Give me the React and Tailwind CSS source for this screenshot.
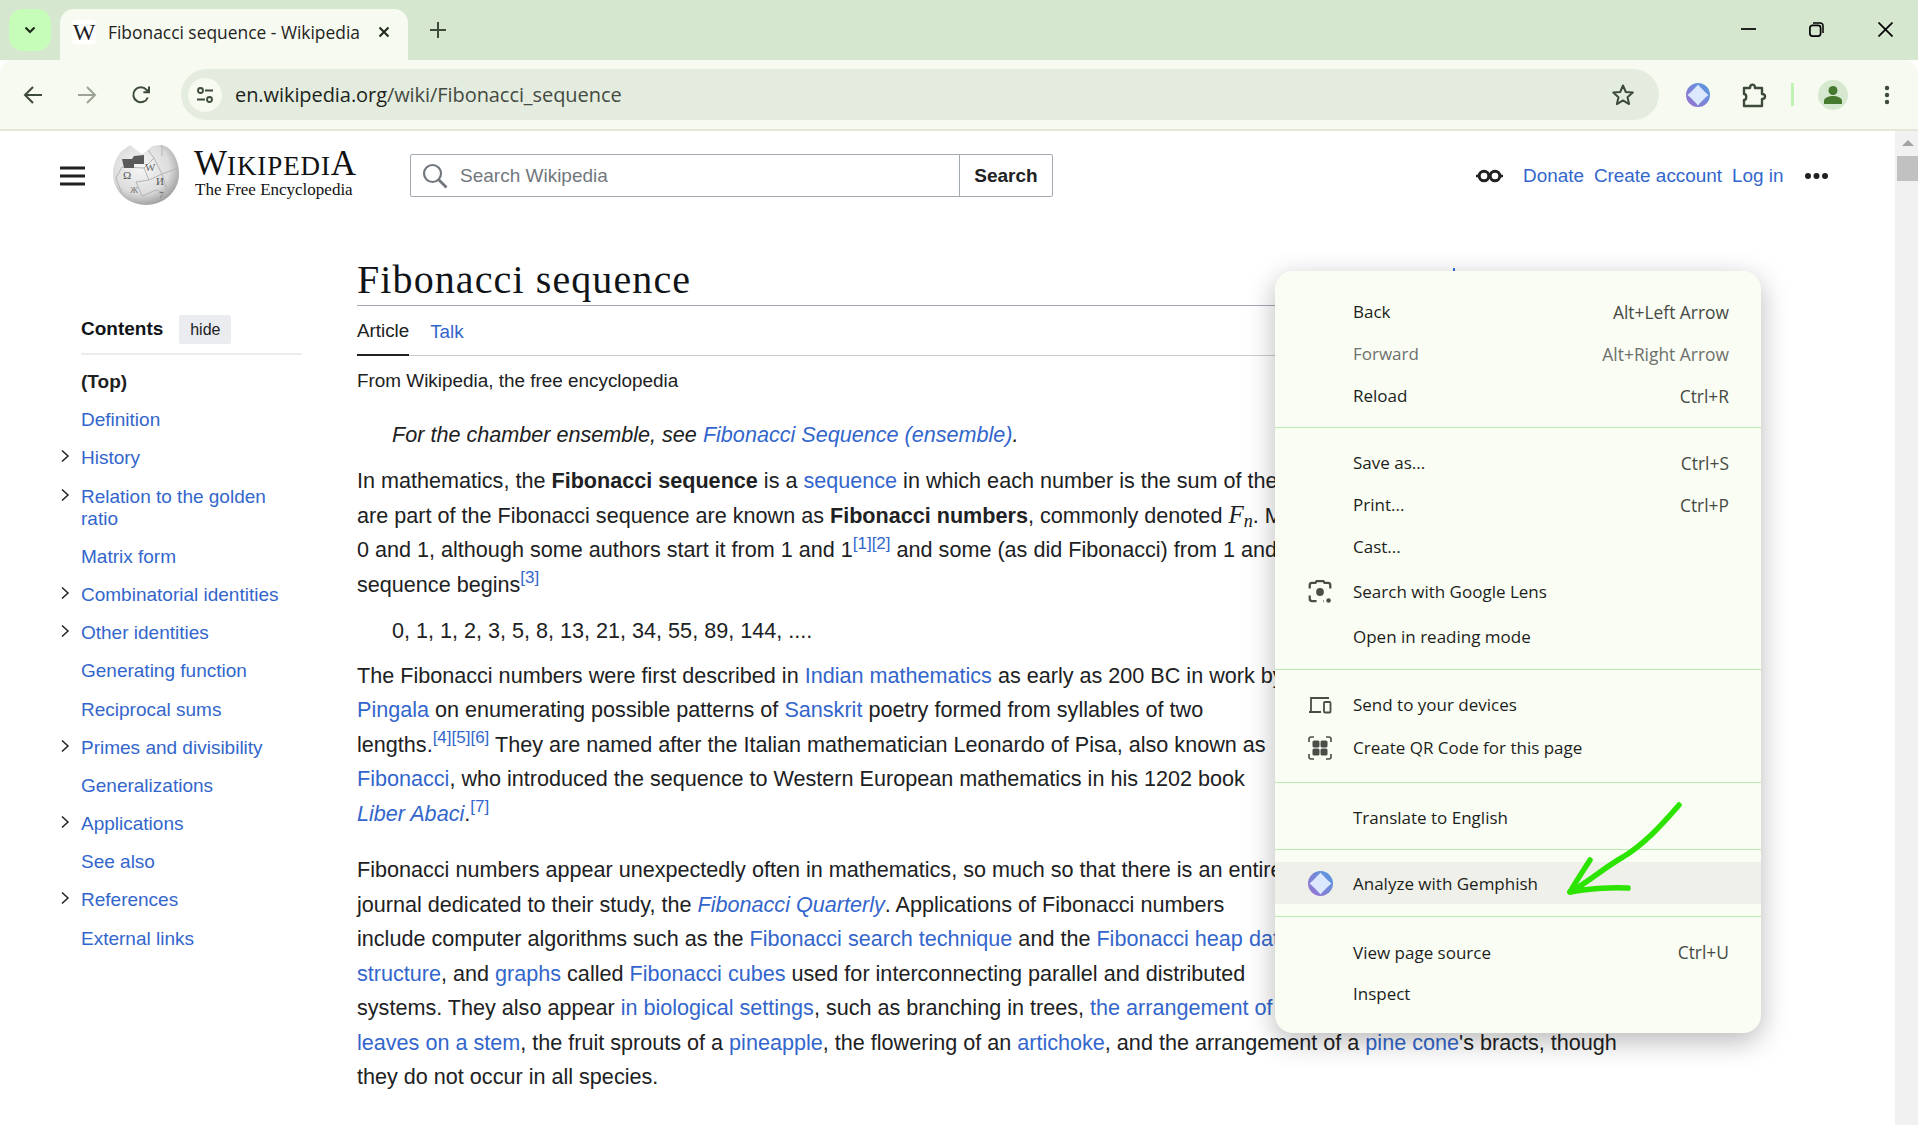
import React from "react";

const A = ({ children, i }) => (
  <a className={"text-[#3366cc] " + (i ? "italic" : "")}>{children}</a>
);
const Sup = ({ children }) => (
  <sup className="align-baseline text-[17px] text-[#3366cc]">{children}</sup>
);

const Gem = ({ size = 24 }) => (
  <svg width={size} height={size} viewBox="0 0 24 24">
    <defs>
      <linearGradient id={"gemg" + size} x1="0" y1="1" x2="1" y2="0">
        <stop offset="0" stopColor="#9a6fd0" />
        <stop offset="0.5" stopColor="#7a86d8" />
        <stop offset="1" stopColor="#4f9ae0" />
      </linearGradient>
    </defs>
    <circle cx="12" cy="12" r="12" fill={`url(#gemg${size})`} />
    <path d="M12 1.5 C13 3 21 11 22.5 12 C21 13 13 21 12 22.5 C11 21 3 13 1.5 12 C3 11 11 3 12 1.5Z" fill="#dbe8fe" />
  </svg>
);

const Globe = () => (
  <svg width="68" height="62" viewBox="0 0 68 62">
    <defs>
      <radialGradient id="gl" cx="0.42" cy="0.38" r="0.7">
        <stop offset="0" stopColor="#f6f6f6" />
        <stop offset="0.62" stopColor="#dcdcdc" />
        <stop offset="1" stopColor="#8c8c8c" />
      </radialGradient>
    </defs>
    <path d="M34 61C16 61 1 47 1 30C1 20 5 11 11 6L18 1L23 5L30 10L36 6L40 2L50 1L55 3C63 9 67 19 67 30C67 47 52 61 34 61Z" fill="url(#gl)" />
    <path d="M10 23L4 34L10 50M10 23L32 24L37 36L24 38L30 52L44 46L56 50M37 36L50 30L56 50M32 24L42 14L50 30L66 24M42 14L36 6M50 1L50 12" fill="none" stroke="#b4b4b4" strokeWidth="1" />
    <path d="M10 15L20 15L22 12L32 11L32 20L22 20L22 24L12 24Z" fill="#5a5a5a" />
    <text x="11" y="35" fontSize="11" fill="#555" fontFamily="Liberation Serif, serif">Ω</text>
    <text x="33" y="27" fontSize="11" fill="#666" fontFamily="Liberation Serif, serif">W</text>
    <text x="44" y="41" fontSize="11" fill="#555" fontFamily="Liberation Serif, serif">И</text>
    <text x="18" y="49" fontSize="9" fill="#777" fontFamily="Liberation Serif, serif">Ж</text>
    <text x="47" y="54" fontSize="9" fill="#666" fontFamily="Liberation Serif, serif">7</text>
  </svg>
);

const Chev = () => (
  <svg width="12" height="14" viewBox="0 0 12 14" className="absolute left-[-22px] top-[2px]">
    <path d="M3 1.5 L9 7 L3 12.5" fill="none" stroke="#202122" strokeWidth="1.5" />
  </svg>
);

const toc = [
  ["Definition", 0],
  ["History", 1],
  ["Relation to the golden ratio", 1],
  ["Matrix form", 0],
  ["Combinatorial identities", 1],
  ["Other identities", 1],
  ["Generating function", 0],
  ["Reciprocal sums", 0],
  ["Primes and divisibility", 1],
  ["Generalizations", 0],
  ["Applications", 1],
  ["See also", 0],
  ["References", 1],
  ["External links", 0],
];

const Item = ({ label, short, dim, icon, cls = "" }) => (
  <div className={"relative flex h-[42px] items-center pl-[78px] pr-[32px] " + cls}>
    {icon && <span className="absolute left-[27px] top-0 flex h-full w-[36px] items-center justify-center">{icon}</span>}
    <span className={dim ? "text-[#6d706b]" : "text-[#1c1e1b]"}>{label}</span>
    {short && <span className={"ml-auto text-[17.4px] " + (dim ? "text-[#6d706b]" : "text-[#464a44]")}>{short}</span>}
  </div>
);
const Sep = ({ cls }) => <div className={"h-px bg-[#b9eab0] " + cls} />;

export default function App() {
  return (
    <div className="relative flex h-[1125px] w-[1918px] flex-col overflow-hidden bg-white font-['Liberation_Sans',sans-serif]">
      {/* Tab strip */}
      <div className="flex h-[60px] shrink-0 items-start bg-[#d6e7d0] font-['Open_Sans',sans-serif]">
        <div className="ml-[9px] mt-[9px] flex h-[42px] w-[42px] items-center justify-center rounded-[14px] bg-[#c6fdb9]">
          <svg width="14" height="14" viewBox="0 0 14 14"><path d="M2.5 4.5 L7 9 L11.5 4.5" fill="none" stroke="#1d2a1a" strokeWidth="2.2" /></svg>
        </div>
        <div className="ml-[9px] mt-[9px] flex h-[51px] w-[348px] items-center rounded-t-[14px] bg-[#f6faf0] pb-[5px]">
          <span className="ml-[12px] flex h-[24px] w-[24px] items-center justify-center rounded-[4px] bg-white font-['Liberation_Serif',serif] text-[24px] text-[#202122]">W</span>
          <span className="ml-[12px] whitespace-nowrap text-[17.4px] text-[#1f231d]">Fibonacci sequence - Wikipedia</span>
          <svg className="ml-auto mr-[17px]" width="14" height="14" viewBox="0 0 14 14"><path d="M2.5 2.5 L11.5 11.5 M11.5 2.5 L2.5 11.5" stroke="#1d2a1a" strokeWidth="2" /></svg>
        </div>
        <svg className="ml-[22px] mt-[22px]" width="16" height="16" viewBox="0 0 16 16"><path d="M8 0 V16 M0 8 H16" stroke="#3f4a3b" strokeWidth="2" /></svg>
        <div className="ml-auto flex items-center pt-[22px]">
          <svg width="15" height="15" viewBox="0 0 15 15"><path d="M0 7 H15" stroke="#000" strokeWidth="1.7" /></svg>
          <svg className="ml-[53px]" width="15" height="15" viewBox="0 0 15 15"><rect x="0.9" y="3.4" width="10.7" height="10.7" rx="2.5" fill="none" stroke="#000" strokeWidth="1.7" /><path d="M4 1 H11 Q14 1 14 4 V11" fill="none" stroke="#000" strokeWidth="1.5" /></svg>
          <svg className="ml-[54px] mr-[25px]" width="15" height="15" viewBox="0 0 15 15"><path d="M0.5 0.5 L14.5 14.5 M14.5 0.5 L0.5 14.5" stroke="#000" strokeWidth="1.7" /></svg>
        </div>
      </div>

      {/* Toolbar */}
      <div className="flex h-[71px] shrink-0 items-start rounded-t-[14px] border-b-2 border-[#e2e7da] bg-[#f6faf0] pt-[9px] font-['Open_Sans',sans-serif]">
        <svg className="ml-[23px] mt-[16px]" width="20" height="20" viewBox="0 0 20 20"><path d="M19 10 H2.5 M10 2 L2 10 L10 18" fill="none" stroke="#3e4a3a" strokeWidth="2" /></svg>
        <svg className="ml-[34px] mt-[16px]" width="20" height="20" viewBox="0 0 20 20"><path d="M1 10 H17.5 M10 2 L18 10 L10 18" fill="none" stroke="#9aa396" strokeWidth="2" /></svg>
        <svg className="ml-[34px] mt-[16px]" width="20" height="20" viewBox="0 0 20 20"><path d="M16.8 12.5 A7.5 7.5 0 1 1 15.5 4.8 L18 7.2 M18 1.5 V7.2 H12.4" fill="none" stroke="#3e4a3a" strokeWidth="2" /></svg>
        <div className="ml-[30px] flex h-[51px] w-[1478px] shrink-0 items-center rounded-full bg-[#e4ecdf]">
          <span className="ml-[7px] flex h-[34px] w-[34px] items-center justify-center rounded-full bg-[#f6faf0]">
            <svg width="18" height="18" viewBox="0 0 18 18"><circle cx="4.5" cy="4.5" r="2.5" fill="none" stroke="#3e4a3a" strokeWidth="1.8" /><path d="M9 4.5 H17 M1 13.5 H9" stroke="#3e4a3a" strokeWidth="1.8" /><circle cx="13.5" cy="13.5" r="2.5" fill="none" stroke="#3e4a3a" strokeWidth="1.8" /></svg>
          </span>
          <span className="ml-[13px] whitespace-nowrap text-[20px] tracking-[-0.07px] text-[#1c1f1a]">en.wikipedia.org<span className="text-[#454a42]">/wiki/Fibonacci_sequence</span></span>
          <svg className="ml-auto mr-[24px]" width="24" height="24" viewBox="0 0 24 24"><path d="M12 2.5 L14.8 9 L21.8 9.6 L16.5 14.2 L18.1 21.1 L12 17.4 L5.9 21.1 L7.5 14.2 L2.2 9.6 L9.2 9 Z" fill="none" stroke="#3e4a3a" strokeWidth="2" strokeLinejoin="round" /></svg>
        </div>
        <span className="ml-[27px] mt-[14px]"><Gem size={24} /></span>
        <svg className="ml-[31px] mt-[13px]" width="26" height="26" viewBox="0 0 26 26"><path d="M3 6 H9 C9 1.5 14 1.5 14 6 H21 V12 C25 12 25 17 21 17 V24 H3 V18 C6 18 6 12 3 12 Z" fill="none" stroke="#3e4a3a" strokeWidth="2.4" strokeLinejoin="round" /></svg>
        <div className="ml-[24px] mt-[14px] h-[23px] w-[3px] bg-[#bff2b3]" />
        <div className="ml-[24px] mt-[11px] flex h-[30px] w-[30px] items-center justify-center rounded-full bg-[#d7e8d0]">
          <svg width="20" height="20" viewBox="0 0 20 20"><circle cx="10" cy="5.5" r="4.5" fill="#47792f" /><path d="M1 19 V16 C1 12.5 6 11 10 11 C14 11 19 12.5 19 16 V19 Z" fill="#47792f" /></svg>
        </div>
        <svg className="ml-[36px] mt-[16px]" width="6" height="20" viewBox="0 0 6 20"><circle cx="3" cy="3" r="2.2" fill="#3e4a3a" /><circle cx="3" cy="10" r="2.2" fill="#3e4a3a" /><circle cx="3" cy="17" r="2.2" fill="#3e4a3a" /></svg>
      </div>

      {/* Page */}
      <div className="flex min-h-0 flex-1">
        <div className="min-w-0 flex-1 overflow-hidden text-[#202122]">
          {/* Wiki header */}
          <div className="flex h-[76px] items-start">
            <svg className="ml-[60px] mt-[35px]" width="25" height="20" viewBox="0 0 25 20"><path d="M0 2 H25 M0 10 H25 M0 18 H25" stroke="#202122" strokeWidth="3" /></svg>
            <span className="ml-[27px] mt-[13px]"><Globe /></span>
            <div className="ml-[14px] mt-[17px] flex w-[162px] flex-col font-['Liberation_Serif',serif] text-[#111]">
              <span className="h-[32px] whitespace-nowrap text-[35px] leading-[32px]">W<span className="text-[27px] tracking-[0.9px]">IKIPEDI</span>A</span>
              <span className="ml-[1px] mt-[1px] whitespace-nowrap text-[17px] leading-[18px]">The Free Encyclopedia</span>
            </div>
            <div className="ml-[54px] mt-[23px] flex h-[43px] w-[643px] shrink-0 rounded-[2px] border border-[#a2a9b1]">
              <div className="flex w-[549px] items-center border-r border-[#a2a9b1] pt-[1px]">
                <svg className="ml-[11px]" width="26" height="26" viewBox="0 0 26 26"><circle cx="10.5" cy="10.5" r="8.5" fill="none" stroke="#72777d" strokeWidth="2.2" /><path d="M16.5 16.5 L24.5 24.5" stroke="#72777d" strokeWidth="2.8" /></svg>
                <span className="ml-[12px] text-[19px] text-[#72777d]">Search Wikipedia</span>
              </div>
              <div className="flex flex-1 items-center justify-center pt-[1px] text-[19px] font-bold text-[#202122]">Search</div>
            </div>
            <svg className="ml-[423px] mt-[37px]" width="27" height="16" viewBox="0 0 27 16"><circle cx="8" cy="8" r="4.8" fill="none" stroke="#202122" strokeWidth="3" /><circle cx="19" cy="8" r="4.8" fill="none" stroke="#202122" strokeWidth="3" /><path d="M0 8 H3 M12 8 H15 M24 8 H27" stroke="#202122" strokeWidth="2.5" /></svg>
            <div className="ml-[20px] mt-[33px] flex gap-[10px] whitespace-nowrap text-[18.9px] leading-[24px] text-[#3366cc]">
              <span>Donate</span><span>Create account</span><span>Log in</span>
            </div>
            <svg className="ml-[20px] mt-[41px]" width="25" height="8" viewBox="0 0 25 8"><circle cx="4" cy="4" r="3" fill="#202122" /><circle cx="12.5" cy="4" r="3" fill="#202122" /><circle cx="21" cy="4" r="3" fill="#202122" /></svg>
          </div>

          <div className="flex">
            {/* Sidebar */}
            <div className="ml-[81px] mt-[109px] w-[221px] shrink-0 text-[19px] leading-[22px]">
              <div className="flex h-[39px] items-start border-b-2 border-[#eaecf0]">
                <b className="mt-[2px] text-[#101418]">Contents</b>
                <span className="ml-[16px] -mt-[1px] flex h-[29px] w-[52px] items-center justify-center rounded-[2px] bg-[#eaecf0] text-[16px]">hide</span>
              </div>
              <div className="mt-[16px] font-bold">(Top)</div>
              {toc.map(([t, c]) => (
                <div key={t} className="relative mt-[16.2px] text-[#3366cc]">
                  {c ? <Chev /> : null}
                  {t}
                </div>
              ))}
            </div>

            {/* Article */}
            <div className="ml-[55px] w-[1272px] shrink-0 whitespace-nowrap">
              <h1 className="mt-[48px] border-b border-[#a2a9b1] pb-[1px] font-['Liberation_Serif',serif] text-[40px] leading-[49px] tracking-[1.1px] text-[#101418]">Fibonacci sequence</h1>
              <div className="flex h-[50px] items-stretch gap-[21px] border-b border-[#c8ccd1] text-[18.8px]">
                <span className="-mb-[1px] flex items-center border-b-2 border-[#202122] pt-[3px]">Article</span>
                <span className="flex items-center pt-[3px] text-[#3366cc]">Talk</span>
              </div>
              <div className="mt-[12px] text-[18.9px] leading-[26px]">From Wikipedia, the free encyclopedia</div>
              <div className="mt-[27px] ml-[35px] text-[21.6px] italic leading-[28px]">For the chamber ensemble, see <A>Fibonacci Sequence (ensemble)</A>.</div>
              <div className="text-[21.6px] leading-[34.5px]">
                <p className="mt-[15px]">
                  In mathematics, the <b>Fibonacci sequence</b> is a <A>sequence</A> in which each number is the sum of the two preceding ones. Numbers that<br />
                  are part of the Fibonacci sequence are known as <b>Fibonacci numbers</b>, commonly denoted <i className="font-['Liberation_Serif',serif] text-[25px] leading-[0]">F<sub className="text-[18px]">n</sub></i>. Many writers begin the sequence with<br />
                  0 and 1, although some authors start it from 1 and 1<Sup>[1][2]</Sup> and some (as did Fibonacci) from 1 and 2. Starting from 0 and 1, the<br />
                  sequence begins<Sup>[3]</Sup>
                </p>
                <p className="ml-[35px] mt-[12px]">0, 1, 1, 2, 3, 5, 8, 13, 21, 34, 55, 89, 144, ....</p>
                <p className="mt-[10px]">
                  The Fibonacci numbers were first described in <A>Indian mathematics</A> as early as 200 BC in work by<br />
                  <A>Pingala</A> on enumerating possible patterns of <A>Sanskrit</A> poetry formed from syllables of two<br />
                  lengths.<Sup>[4][5][6]</Sup> They are named after the Italian mathematician Leonardo of Pisa, also known as<br />
                  <A>Fibonacci</A>, who introduced the sequence to Western European mathematics in his 1202 book<br />
                  <A i>Liber Abaci</A>.<Sup>[7]</Sup>
                </p>
                <p className="mt-[22px]">
                  Fibonacci numbers appear unexpectedly often in mathematics, so much so that there is an entire<br />
                  journal dedicated to their study, the <A i>Fibonacci Quarterly</A>. Applications of Fibonacci numbers<br />
                  include computer algorithms such as the <A>Fibonacci search technique</A> and the <A>Fibonacci heap data</A><br />
                  <A>structure</A>, and <A>graphs</A> called <A>Fibonacci cubes</A> used for interconnecting parallel and distributed<br />
                  systems. They also appear <A>in biological settings</A>, such as branching in trees, <A>the arrangement of</A><br />
                  <A>leaves on a stem</A>, the fruit sprouts of a <A>pineapple</A>, the flowering of an <A>artichoke</A>, and the arrangement of a <A>pine cone</A>'s bracts, though<br />
                  they do not occur in all species.
                </p>
                <p className="mt-[22px]">
                  Fibonacci numbers are also strongly related to the <A>golden ratio</A>: <A>Binet's formula</A> expresses the <i>n</i>th Fibonacci number in terms of
                </p>
              </div>
            </div>
          </div>
        </div>

        {/* Scrollbar */}
        <div className="flex w-[23px] shrink-0 flex-col bg-[#f1f1f1]">
          <div className="ml-[7px] mt-[9px] h-0 w-0 border-x-[6px] border-b-[6px] border-x-transparent border-b-[#a3a3a3]" />
          <div className="ml-[2px] mt-[10px] h-[25px] flex-none bg-[#c1c1c1]" />
        </div>
      </div>

      {/* Context menu */}
      <div className="absolute left-[1275px] top-[271px] h-[762px] w-[486px] rounded-[18px] bg-[#fafdf4] pt-[20px] font-['Open_Sans',sans-serif] text-[17px] shadow-[0_8px_28px_rgba(0,0,0,0.28)]">
        <Item label="Back" short="Alt+Left Arrow" />
        <Item label="Forward" short="Alt+Right Arrow" dim />
        <Item label="Reload" short="Ctrl+R" />
        <Sep cls="mt-[10px]" />
        <Item label="Save as..." short="Ctrl+S" cls="mt-[14px]" />
        <Item label="Print..." short="Ctrl+P" />
        <Item label="Cast..." />
        <Item
          label="Search with Google Lens"
          cls="mt-[3px]"
          icon={
            <svg width="24" height="24" viewBox="2 1.5 20 21" fill="none" stroke="#4a4d48" strokeWidth="2">
              <path d="M3 9 V6 Q3 4 5 4 H8 L9 2.5 H15 L16 4 H19 Q21 4 21 6 V9 M3 15 V18 Q3 20 5 20 H9 M15 20 H15.5" />
              <circle cx="12" cy="12" r="3.4" fill="#4a4d48" stroke="none" />
              <circle cx="19.5" cy="19.5" r="2" fill="#4a4d48" stroke="none" />
            </svg>
          }
        />
        <Item label="Open in reading mode" cls="mt-[3px]" />
        <Sep cls="mt-[11px]" />
        <Item
          label="Send to your devices"
          cls="mt-[14px]"
          icon={
            <svg width="24" height="18" viewBox="0 0 24 18" fill="none" stroke="#4a4d48" strokeWidth="1.8">
              <path d="M3 15 V2 H21 M1 16 H13" />
              <rect x="16" y="6" width="6.5" height="10.5" rx="1" />
            </svg>
          }
        />
        <Item
          label="Create QR Code for this page"
          cls="mt-[1px]"
          icon={
            <svg width="24" height="24" viewBox="0 0 24 24" fill="none" stroke="#4a4d48" strokeWidth="1.6">
              <path d="M1 6 V3 Q1 1 3 1 H6 M18 1 H21 Q23 1 23 3 V6 M1 18 V21 Q1 23 3 23 H6 M18 23 H21 Q23 23 23 21 V18" />
              <rect x="4.5" y="4.5" width="7" height="7" rx="1.5" fill="#4a4d48" stroke="none" />
              <rect x="12.5" y="4.5" width="7" height="7" rx="1.5" fill="#4a4d48" stroke="none" />
              <rect x="4.5" y="12.5" width="7" height="7" rx="1.5" fill="#4a4d48" stroke="none" />
              <rect x="12.5" y="12.5" width="7" height="7" rx="1.5" fill="#4a4d48" stroke="none" />
            </svg>
          }
        />
        <Sep cls="mt-[13px]" />
        <Item label="Translate to English" cls="mt-[13px] pt-[1px]" />
        <Sep cls="mt-[11px]" />
        <Item label="Analyze with Gemphish" cls="mt-[12px] bg-[#eef0e9] pt-[2px]" icon={<Gem size={25} />} />
        <Sep cls="mt-[12px]" />
        <Item label="View page source" short="Ctrl+U" cls="mt-[14px] pt-[1px]" />
        <Item label="Inspect" />
      </div>

      {/* Tiny mark peeking above the menu */}
      <div className="absolute left-[1453px] top-[268px] h-[3px] w-[2px] bg-[#3366cc]" />

      {/* Hand-drawn arrow */}
      <svg className="absolute left-[1555px] top-[795px]" width="135" height="110" viewBox="0 0 135 110" fill="none" stroke="#2ce400" strokeWidth="5.5" strokeLinecap="round" strokeLinejoin="round">
        <path d="M124 10 C105 32 88 50 68 62 C50 72 32 88 15 97 C30 94 55 92 73 93" />
        <path d="M35 65 C28 76 20 88 15 97" />
      </svg>
    </div>
  );
}
